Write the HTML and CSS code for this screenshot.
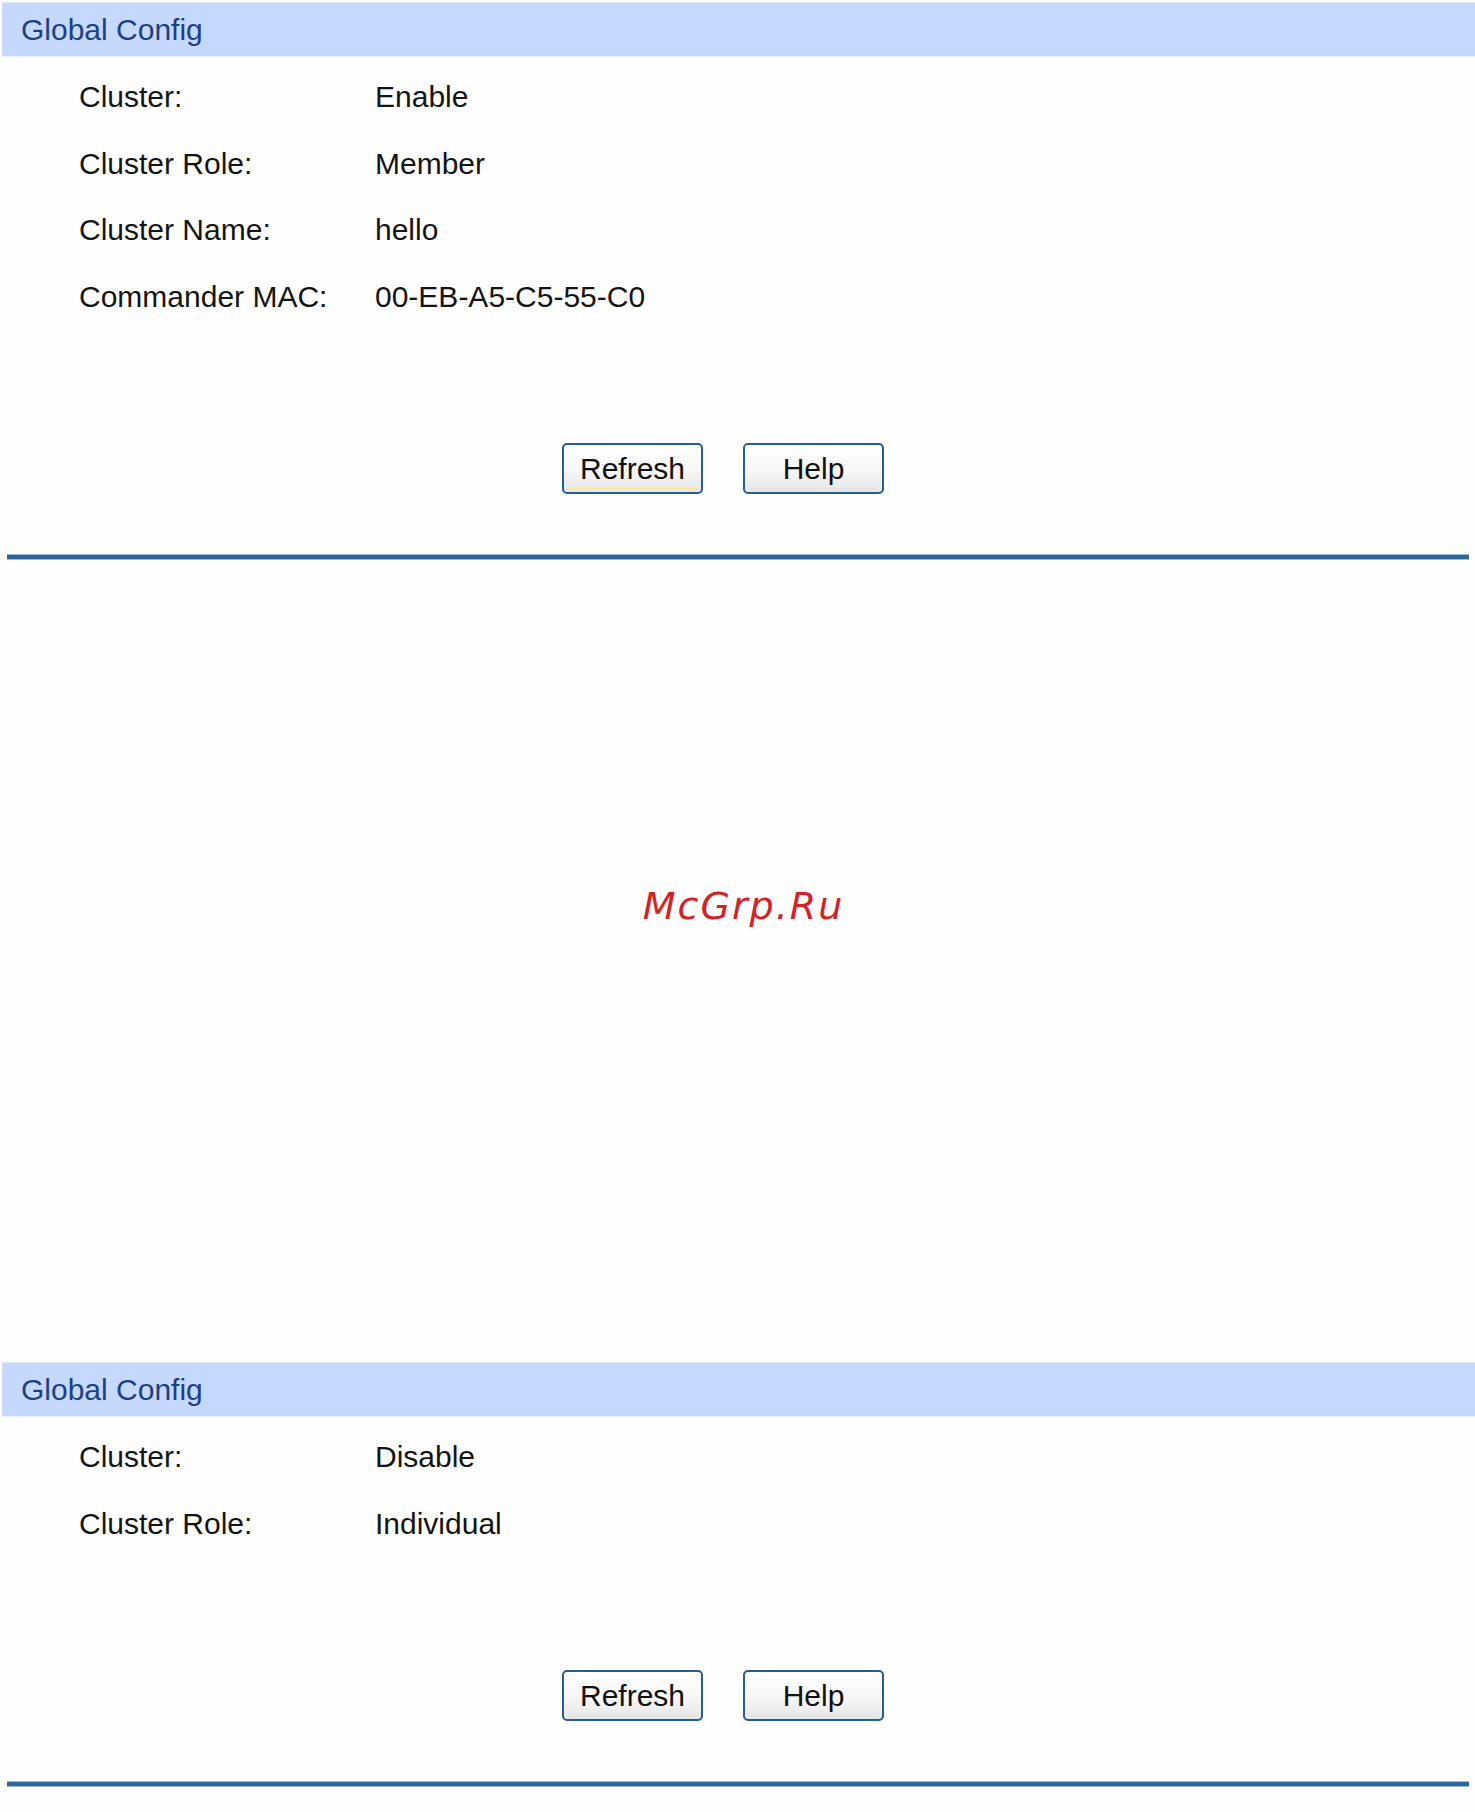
FILE: index.html
```html
<!DOCTYPE html>
<html lang="en">
<head>
<meta charset="utf-8">
<title>Global Config</title>
<link rel="stylesheet" href="styles.css">
</head>
<body>
  <section class="panel">
    <div class="panel-head">Global Config</div>
    <div class="rows">
      <div class="row"><span class="label">Cluster:</span><span class="value">Enable</span></div>
      <div class="row"><span class="label">Cluster Role:</span><span class="value">Member</span></div>
      <div class="row"><span class="label">Cluster Name:</span><span class="value">hello</span></div>
      <div class="row"><span class="label">Commander MAC:</span><span class="value">00-EB-A5-C5-55-C0</span></div>
    </div>
    <div class="actions">
      <button class="btn" type="button">Refresh</button>
      <button class="btn" type="button">Help</button>
    </div>
    <div class="rule"></div>
  </section>

  <div class="gap">
    <div class="mark">McGrp.Ru</div>
  </div>

  <section class="panel">
    <div class="panel-head">Global Config</div>
    <div class="rows">
      <div class="row"><span class="label">Cluster:</span><span class="value">Disable</span></div>
      <div class="row"><span class="label">Cluster Role:</span><span class="value">Individual</span></div>
    </div>
    <div class="actions">
      <button class="btn" type="button">Refresh</button>
      <button class="btn" type="button">Help</button>
    </div>
    <div class="rule"></div>
  </section>
</body>
</html>
```

FILE: styles.css
```css
html, body {
  margin: 0;
  padding: 0;
  background: #fefefe;
}

body {
  font-family: "Liberation Sans", Arial, sans-serif;
  font-size: 30px;
  color: #141414;
}

.panel {
  padding-left: 2px;
}

.panel:first-child {
  padding-top: 2px;
}

/* light blue title band */
.panel-head {
  height: 55px;
  line-height: 53px;
  padding-left: 19px;
  background: #c5d9fe;
  color: #1d3f8a;
  border-top: 1px solid #dde8fc;
  border-bottom: 1px solid #e6eefc;
  box-sizing: border-box;
}

.rows {
  padding-top: 7px;
}

.row {
  display: grid;
  grid-template-columns: 296px auto;
  height: 66.5px;
  align-items: center;
  padding-left: 77px;
}

.actions {
  display: flex;
  gap: 40px;
  margin-top: 113px;
  padding-left: 560px;
}

.btn {
  width: 141px;
  height: 51px;
  box-sizing: border-box;
  border: 2px solid #235e99;
  border-radius: 5px;
  background: linear-gradient(#ffffff 0%, #f6f6f6 55%, #e6e6e6 100%);
  font-family: "Liberation Sans", Arial, sans-serif;
  font-size: 30px;
  color: #111;
  padding: 0;
  position: relative;
  cursor: pointer;
}

/* faint dotted glow along the lower edge of the face */
.btn::after {
  content: "";
  position: absolute;
  left: 6px;
  right: 6px;
  bottom: 3px;
  border-bottom: 1px dotted #f1dc8a;
}

.rule {
  margin: 60px 0 0 5px;
  width: 1462px;
  height: 6px;
  box-sizing: border-box;
  background: #2b6599;
  border-top: 1px solid #9bb9d6;
  border-bottom: 1px solid #9bb9d6;
}

.gap {
  height: 802px;
  box-sizing: border-box;
  padding-top: 323px;
}

.mark {
  font-family: "DejaVu Sans", sans-serif;
  font-style: italic;
  font-size: 38px;
  line-height: 46px;
  letter-spacing: 2px;
  color: #d42226;
  text-align: center;
  padding-left: 12px;
}
```
